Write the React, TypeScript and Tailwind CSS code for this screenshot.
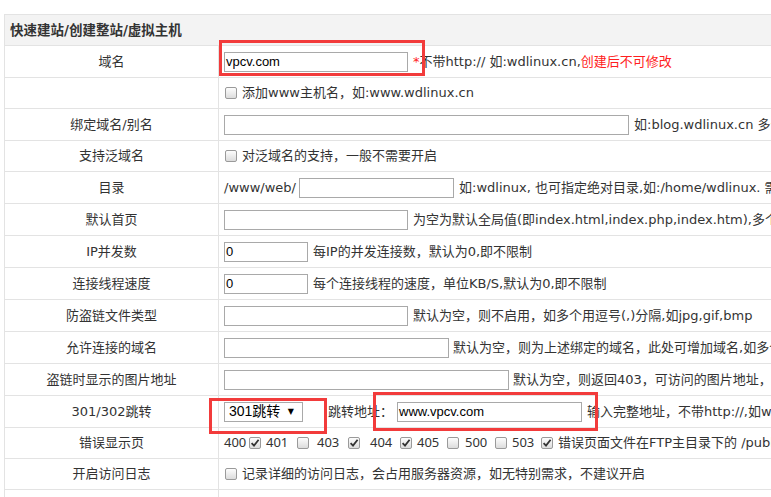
import React from "react";

const Box = ({ checked = false }: { checked?: boolean }) => (
  <span className="inline-flex h-[12px] w-[12px] shrink-0 items-center justify-center rounded-[2px] border border-[#9a9a9a] bg-gradient-to-b from-[#fdfdfd] to-[#dcdcdc]">
    {checked && (
      <svg width="10" height="10" viewBox="0 0 10 10">
        <path d="M1.6 5.2 L4 7.6 L8.6 1.8" fill="none" stroke="#333" strokeWidth="1.8" />
      </svg>
    )}
  </span>
);

const Input = ({ w, value = "" }: { w: string; value?: string }) => (
  <span
    className={`inline-flex h-[20px] shrink-0 items-center border border-[#a9a9a9] bg-white pl-[1px] text-[13px] text-black ${w}`}
    style={{ fontFamily: "'Liberation Sans', Arial, sans-serif" }}
  >
    {value}
  </span>
);

const Row = ({
  label,
  h,
  children,
}: {
  label: string;
  h: string;
  children?: React.ReactNode;
}) => (
  <div className={`flex border-b border-[#e3e3e3] ${h}`}>
    <div className="flex w-[214px] shrink-0 items-center justify-center border-r border-[#e3e3e3] text-[#333]">
      {label}
    </div>
    <div className="flex flex-1 items-center whitespace-nowrap pl-[5px] text-[#333]">{children}</div>
  </div>
);

const Num = ({ n, cls }: { n: string; cls: string }) => (
  <span className={`inline-block shrink-0 ${cls}`} style={{ fontFamily: "'Noto Sans', sans-serif" }}>
    {n}
  </span>
);

export default function App() {
  return (
    <div
      className="relative h-[497px] w-[771px] overflow-hidden bg-white pl-[4px] pt-[14px] text-[13px]"
      style={{ fontFamily: "'DejaVu Sans', 'Noto Sans CJK SC', sans-serif" }}
    >
      <div className="w-[1000px] border-l border-t border-[#e3e3e3]">
        <div className="flex h-[31px] items-center border-b border-[#e3e3e3] bg-[#f3f3f3] pl-[5px] text-[13.5px] font-bold text-[#333]">
          快速建站/创建整站/虚拟主机
        </div>
        <Row label="域名" h="h-[32px]">
          <Input w="w-[184px]" value="vpcv.com" />
          <span className="ml-[5px]">
            <span className="text-[#ff2020]">*</span>不带http:// 如:wdlinux.cn,
            <span className="text-[#ff2020]">创建后不可修改</span>
          </span>
        </Row>
        <Row label="" h="h-[31px]">
          <span className="ml-[1px] flex items-center">
            <Box />
          </span>
          <span className="ml-[5px]">添加www主机名，如:www.wdlinux.cn</span>
        </Row>
        <Row label="绑定域名/别名" h="h-[32px]">
          <Input w="w-[405px]" />
          <span className="ml-[5px]">如:blog.wdlinux.cn 多个域名用逗号分隔</span>
        </Row>
        <Row label="支持泛域名" h="h-[31px]">
          <span className="ml-[1px] flex items-center">
            <Box />
          </span>
          <span className="ml-[5px]">对泛域名的支持，一般不需要开启</span>
        </Row>
        <Row label="目录" h="h-[32px]">
          <span className="inline-block w-[75px]">/www/web/</span>
          <Input w="w-[155px]" />
          <span className="ml-[5px]">如:wdlinux, 也可指定绝对目录,如:/home/wdlinux. 需要在/www/web/下</span>
        </Row>
        <Row label="默认首页" h="h-[32px]">
          <Input w="w-[184px]" />
          <span className="ml-[5px]">为空为默认全局值(即index.html,index.php,index.htm),多个用逗号分隔</span>
        </Row>
        <Row label="IP并发数" h="h-[32px]">
          <Input w="w-[84px]" value="0" />
          <span className="ml-[5px]">每IP的并发连接数，默认为0,即不限制</span>
        </Row>
        <Row label="连接线程速度" h="h-[32px]">
          <Input w="w-[84px]" value="0" />
          <span className="ml-[5px]">每个连接线程的速度，单位KB/S,默认为0,即不限制</span>
        </Row>
        <Row label="防盗链文件类型" h="h-[32px]">
          <Input w="w-[184px]" />
          <span className="ml-[5px]">默认为空，则不启用，如多个用逗号(,)分隔,如jpg,gif,bmp</span>
        </Row>
        <Row label="允许连接的域名" h="h-[32px]">
          <Input w="w-[225px]" />
          <span className="ml-[4px]">默认为空，则为上述绑定的域名，此处可增加域名,如多个用逗号分隔</span>
        </Row>
        <Row label="盗链时显示的图片地址" h="h-[32px]">
          <Input w="w-[285px]" />
          <span className="ml-[4px]">默认为空，则返回403，可访问的图片地址，如多个用逗号分隔</span>
        </Row>
        <Row label="301/302跳转" h="h-[32px]">
          <span className="relative flex h-[20px] w-[79px] shrink-0 items-center border border-[#a9a9a9] bg-white pl-[4px] text-[14px] text-black">
            <span style={{ fontFamily: "'Liberation Sans', 'Noto Sans CJK SC', sans-serif" }}>301跳转</span>
            <span className="absolute right-[8px] top-[3px] text-[8px]">▼</span>
          </span>
          <span className="ml-[25px] inline-block w-[69px]">跳转地址：</span>
          <Input w="w-[185px]" value="www.vpcv.com" />
          <span className="ml-[5px]">输入完整地址，不带http://,如www.wdlinux.cn</span>
        </Row>
        <Row label="错误显示页" h="h-[31px]">
          <Num n="400" cls="w-[24px]" />
          <span className="ml-[1px] flex"><Box checked /></span>
          <Num n="401" cls="ml-[5px] w-[23px]" />
          <span className="ml-[8px] flex"><Box /></span>
          <Num n="403" cls="ml-[8px] w-[23px]" />
          <span className="ml-[8px] flex"><Box checked /></span>
          <Num n="404" cls="ml-[10px] w-[23px]" />
          <span className="ml-[7px] flex"><Box checked /></span>
          <Num n="405" cls="ml-[5px] w-[23px]" />
          <span className="ml-[7px] flex"><Box /></span>
          <Num n="500" cls="ml-[6px] w-[23px]" />
          <span className="ml-[7px] flex"><Box /></span>
          <Num n="503" cls="ml-[5px] w-[23px]" />
          <span className="ml-[6px] flex"><Box checked /></span>
          <span className="ml-[5px]">错误页面文件在FTP主目录下的 /public_html/errpage 目录</span>
        </Row>
        <Row label="开启访问日志" h="h-[31px]">
          <span className="ml-[1px] flex items-center">
            <Box />
          </span>
          <span className="ml-[5px]">记录详细的访问日志，会占用服务器资源，如无特别需求，不建议开启</span>
        </Row>
        <Row label="" h="h-[31px]">
          <span className="ml-[1px] flex items-center">
            <Box />
          </span>
        </Row>
      </div>

      <div className="absolute left-[219px] top-[40px] h-[36px] w-[206px] border-[3px] border-[#f23b3b]" />
      <div className="absolute left-[209px] top-[398px] h-[36px] w-[118px] border-[3px] border-[#f23b3b]" />
      <div className="absolute left-[373px] top-[392px] h-[39px] w-[225px] border-[3px] border-[#f23b3b]" />
    </div>
  );
}
